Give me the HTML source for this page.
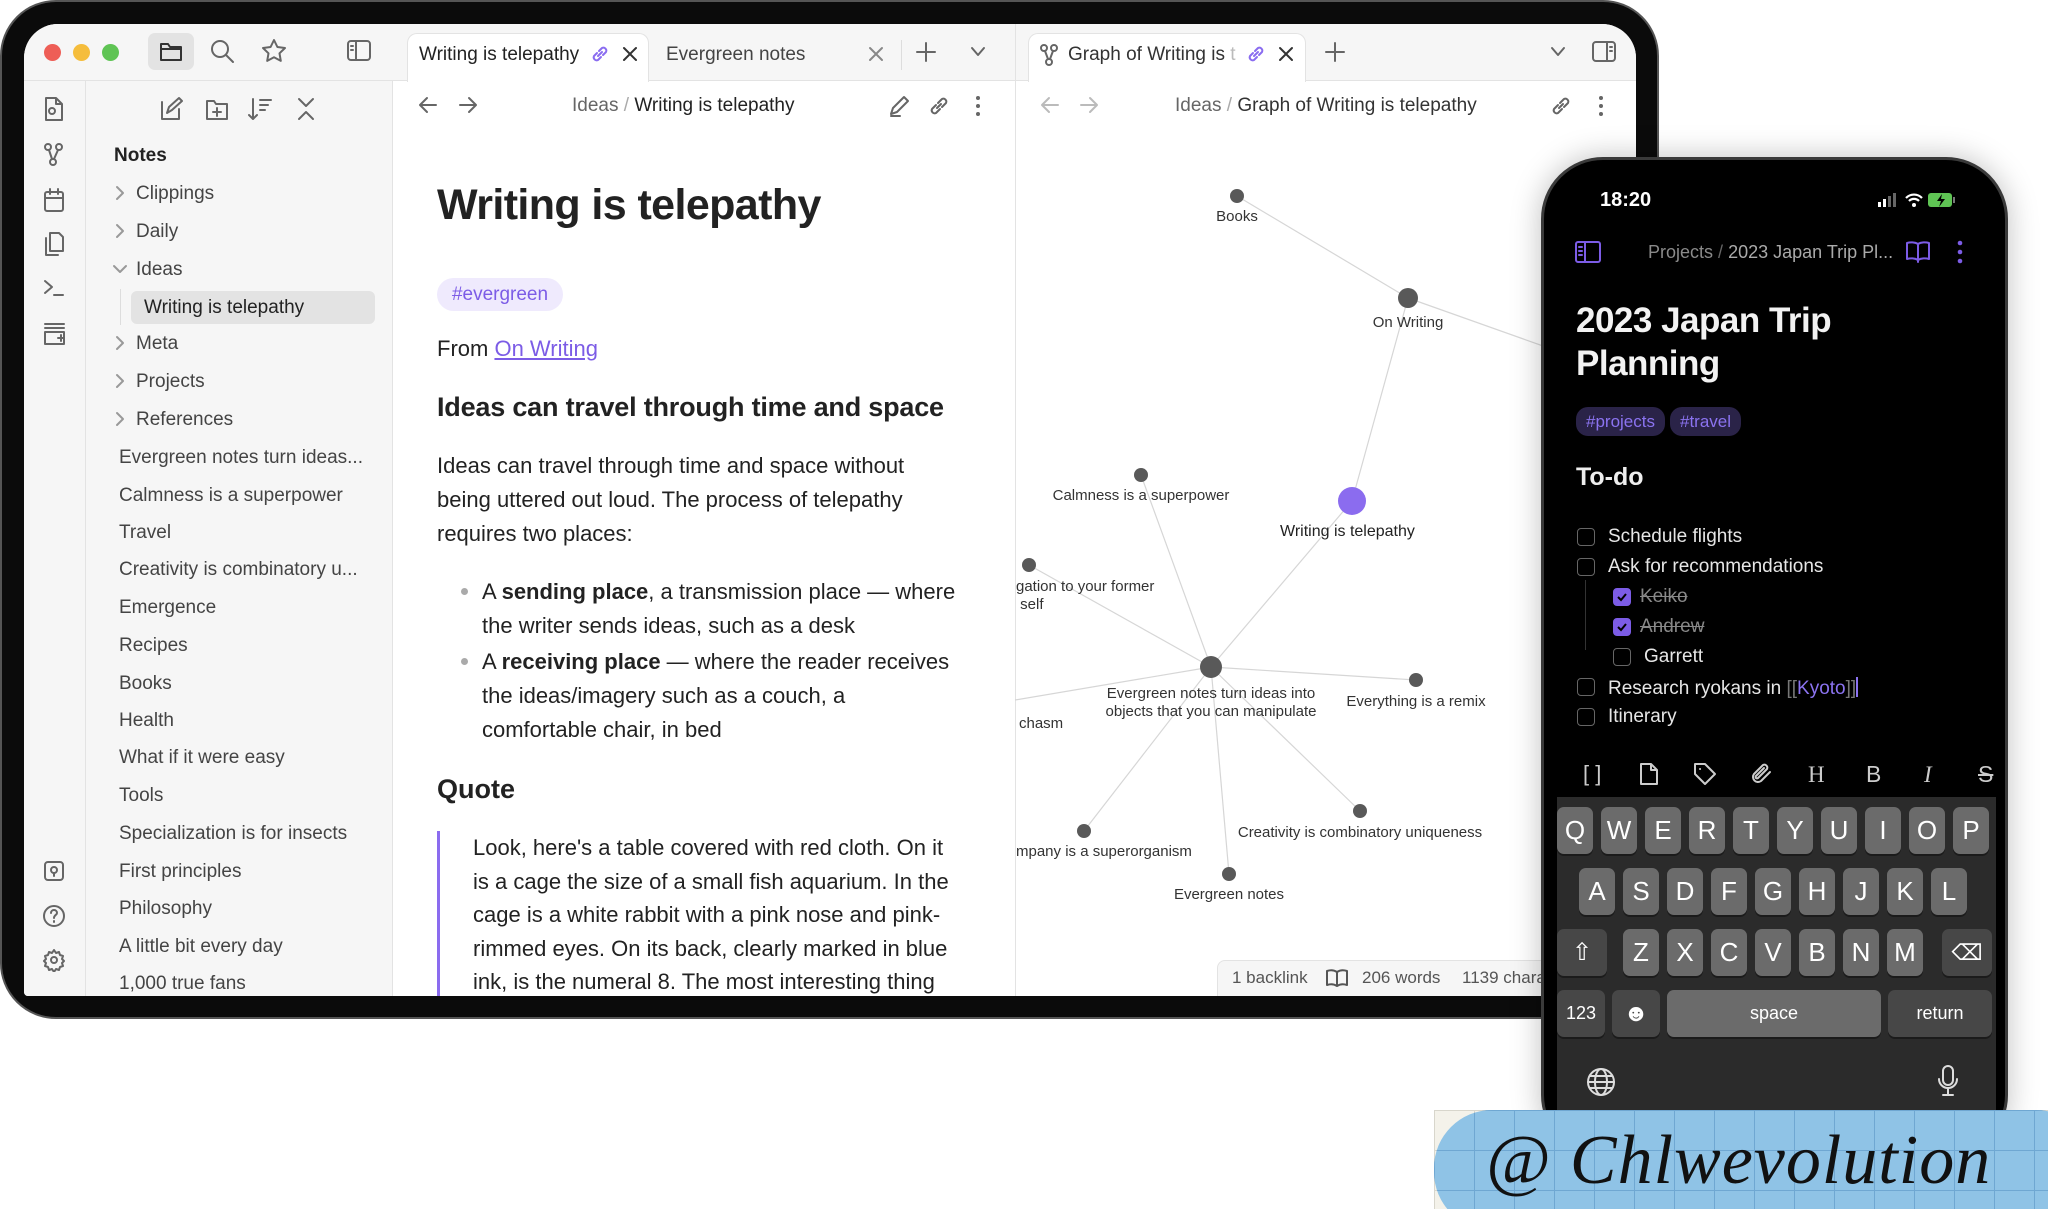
<!DOCTYPE html>
<html><head><meta charset="utf-8">
<style>
*{margin:0;padding:0;box-sizing:border-box}
body{width:2048px;height:1209px;background:#fff;position:relative;overflow:hidden;font-family:"Liberation Sans",sans-serif;color:#222}
.a{position:absolute;white-space:nowrap;line-height:1}
#frame{position:absolute;left:0;top:0;width:1659px;height:1019px;background:#0b0b0b;border-radius:56px;border:2px solid #555}
#scr{position:absolute;left:0;top:0;width:2048px;height:1209px;clip-path:inset(24px 412px 213px 24px round 34px 34px 4px 4px);background:#fff}
.side{font-size:19px;color:#444}
.ic{position:absolute;fill:none;stroke:#666;stroke-width:2;stroke-linecap:round;stroke-linejoin:round}
.g{font-size:15px;color:#333;transform:translateX(-50%)}
#phone{position:absolute;left:1541px;top:157px;width:467px;height:1000px;background:#000;border-radius:62px;border:3px solid #3a3a3a;box-shadow:0 0 30px rgba(0,0,0,.25)}
.pt{color:#e6e6e6;font-size:19px}
.cb{position:absolute;width:18px;height:18px;border:1.6px solid #666;border-radius:4px}
.cbk{background:#7c5ce6;border-color:#7c5ce6}
.key{position:absolute;height:47px;background:#6b6b6b;border-radius:7px;color:#fff;font-size:26px;text-align:center;line-height:47px;box-shadow:0 2px 0 #1b1b1b}
.sp{background:#474747}
</style></head><body>
<div id="frame"></div>
<div id="scr">
 <div style="position:absolute;left:24px;top:24px;width:368px;height:972px;background:#f6f6f6"></div>
 <div style="position:absolute;left:85px;top:81px;width:1px;height:915px;background:#e3e3e3"></div>
 <div style="position:absolute;left:392px;top:24px;width:1px;height:972px;background:#e3e3e3"></div>
 <div style="position:absolute;left:392px;top:24px;width:1244px;height:57px;background:#f6f6f6"></div>
 <div style="position:absolute;left:24px;top:80px;width:1612px;height:1px;background:#e3e3e3"></div>
 <div style="position:absolute;left:1015px;top:24px;width:1px;height:972px;background:#e3e3e3"></div>
 <div style="position:absolute;left:407px;top:33px;width:242px;height:49px;background:#fff;border:1px solid #e3e3e3;border-bottom:none;border-radius:10px 10px 0 0"></div>
 <div style="position:absolute;left:1028px;top:33px;width:278px;height:49px;background:#fff;border:1px solid #e3e3e3;border-bottom:none;border-radius:10px 10px 0 0"></div>
 <div style="position:absolute;left:44px;top:44px;width:17px;height:17px;border-radius:50%;background:#ee5e56"></div>
 <div style="position:absolute;left:73px;top:44px;width:17px;height:17px;border-radius:50%;background:#f5bd3c"></div>
 <div style="position:absolute;left:102px;top:44px;width:17px;height:17px;border-radius:50%;background:#5fc454"></div>
 <div style="position:absolute;left:148px;top:33px;width:46px;height:37px;border-radius:7px;background:#e3e3e3"></div>
 <svg class="ic" style="left:158px;top:39px;stroke:#333" width="26" height="24"><path d="M3 5h7l2 3h11v13H3z M3 10h20"/></svg>
 <svg class="ic" style="left:210px;top:39px" width="26" height="26"><circle cx="10" cy="10" r="8"/><path d="M16 16l7 7"/></svg>
 <svg class="ic" style="left:261px;top:38px" width="26" height="26"><path d="M13 2l3.4 7 7.6 1-5.5 5.3 1.3 7.6L13 19.3 6.2 22.9 7.5 15.3 2 10l7.6-1z"/></svg>
 <svg class="ic" style="left:346px;top:39px" width="26" height="24"><rect x="2" y="2" width="22" height="19" rx="3"/><path d="M10 2v19M5 7h2M5 11h2"/></svg>
 <div class="a" style="left:419px;top:45px;font-size:19px;color:#222">Writing is telepathy</div>
 <svg class="ic" style="left:590px;top:44px;stroke:#8a6cf0" width="20" height="20"><path d="M8 12l4-4M7 9l-3 3a3 3 0 004 4l3-3M13 11l3-3a3 3 0 00-4-4l-3 3"/></svg>
 <svg class="ic" style="left:622px;top:46px;stroke:#333" width="16" height="16"><path d="M2 2l12 12M14 2L2 14"/></svg>
 <div class="a" style="left:666px;top:45px;font-size:19px;color:#444">Evergreen notes</div>
 <svg class="ic" style="left:868px;top:46px;stroke:#888" width="16" height="16"><path d="M2 2l12 12M14 2L2 14"/></svg>
 <div style="position:absolute;left:901px;top:40px;width:1px;height:30px;background:#ddd"></div>
 <svg class="ic" style="left:916px;top:42px" width="20" height="20"><path d="M10 1v18M1 10h18"/></svg>
 <svg class="ic" style="left:970px;top:46px" width="16" height="12"><path d="M2 2l6 7 6-7"/></svg>
 <svg class="ic" style="left:1040px;top:44px" width="18" height="22"><circle cx="4" cy="4" r="3"/><circle cx="14" cy="4" r="3"/><circle cx="9" cy="18" r="3"/><path d="M5 7l3 8M13 7l-3 8"/></svg>
 <div class="a" style="left:1068px;top:45px;font-size:19px;color:#333">Graph of Writing is <span style="color:#bbb">t</span></div>
 <svg class="ic" style="left:1246px;top:44px;stroke:#8a6cf0" width="20" height="20"><path d="M8 12l4-4M7 9l-3 3a3 3 0 004 4l3-3M13 11l3-3a3 3 0 00-4-4l-3 3"/></svg>
 <svg class="ic" style="left:1278px;top:46px;stroke:#333" width="16" height="16"><path d="M2 2l12 12M14 2L2 14"/></svg>
 <svg class="ic" style="left:1325px;top:42px" width="20" height="20"><path d="M10 1v18M1 10h18"/></svg>
 <svg class="ic" style="left:1550px;top:46px" width="16" height="12"><path d="M2 2l6 7 6-7"/></svg>
 <svg class="ic" style="left:1591px;top:40px" width="26" height="24"><rect x="2" y="2" width="22" height="19" rx="3"/><path d="M16 2v19M19 7h2M19 11h2"/></svg>
 <svg class="ic" style="left:42px;top:96px" width="24" height="26"><path d="M4 2h10l6 6v16H4zM14 2v6h6"/><circle cx="10" cy="15" r="3"/></svg>
 <svg class="ic" style="left:42px;top:142px" width="24" height="26"><circle cx="6" cy="5" r="3"/><circle cx="17" cy="5" r="3"/><circle cx="11" cy="20" r="3"/><path d="M7 8l3 9M16 8l-4 9"/></svg>
 <svg class="ic" style="left:42px;top:187px" width="24" height="26"><rect x="3" y="5" width="18" height="19" rx="2"/><path d="M3 11h18M8 2v5M16 2v5"/></svg>
 <svg class="ic" style="left:42px;top:231px" width="24" height="26"><path d="M8 2h9l4 4v14H8zM4 7v17h12"/></svg>
 <svg class="ic" style="left:42px;top:276px" width="24" height="24"><path d="M3 5l7 6-7 6M12 19h9"/></svg>
 <svg class="ic" style="left:42px;top:321px" width="26" height="26"><path d="M3 3h19M3 7h19M3 11h19v12H3zM16 17h6M19 14v6"/></svg>
 <svg class="ic" style="left:42px;top:859px" width="24" height="24"><rect x="3" y="3" width="18" height="18" rx="3"/><circle cx="12" cy="11" r="3"/><path d="M12 14v3"/></svg>
 <svg class="ic" style="left:42px;top:904px" width="24" height="24"><circle cx="12" cy="12" r="10"/><path d="M9 9a3 3 0 116 0c0 2-3 2-3 5M12 17v1"/></svg>
 <svg class="ic" style="left:42px;top:948px" width="24" height="24"><circle cx="12" cy="12" r="3"/><path d="M12 2l2 3 3-1 1 3 3 1-1 3 2 2-2 2 1 3-3 1-1 3-3-1-2 3-2-3-3 1-1-3-3-1 1-3-2-2 2-2-1-3 3-1 1-3 3 1z"/></svg>
 <svg class="ic" style="left:158px;top:96px" width="26" height="26"><path d="M4 6v17h17V13M9 17l2-6 10-9 3 3-10 9z"/></svg>
 <svg class="ic" style="left:204px;top:96px" width="26" height="26"><path d="M3 5h7l2 3h11v15H3zM13 12v8M9 16h8"/></svg>
 <svg class="ic" style="left:248px;top:96px" width="26" height="26"><path d="M5 3v20M1 19l4 4 4-4M12 4h11M12 9h8M12 14h5"/></svg>
 <svg class="ic" style="left:294px;top:96px" width="24" height="26"><path d="M5 3l7 7 7-7M5 23l7-7 7 7"/></svg>
 <div class="a" style="left:114px;top:146px;font-size:19px;font-weight:bold;color:#222">Notes</div>
 <svg class="ic" style="left:114px;top:185px;stroke:#999" width="12" height="16"><path d="M3 2l6 6-6 6"/></svg>
 <div class="a side" style="left:136px;top:184px">Clippings</div>
 <svg class="ic" style="left:114px;top:223px;stroke:#999" width="12" height="16"><path d="M3 2l6 6-6 6"/></svg>
 <div class="a side" style="left:136px;top:222px">Daily</div>
 <svg class="ic" style="left:112px;top:263px;stroke:#999" width="16" height="12"><path d="M2 3l6 6 6-6"/></svg>
 <div class="a side" style="left:136px;top:260px">Ideas</div>
 <div style="position:absolute;left:120px;top:289px;width:1px;height:36px;background:#ddd"></div>
 <div style="position:absolute;left:131px;top:291px;width:244px;height:33px;background:#e3e3e3;border-radius:6px"></div>
 <div class="a side" style="left:144px;top:298px;color:#222">Writing is telepathy</div>
 <svg class="ic" style="left:114px;top:335px;stroke:#999" width="12" height="16"><path d="M3 2l6 6-6 6"/></svg>
 <div class="a side" style="left:136px;top:334px">Meta</div>
 <svg class="ic" style="left:114px;top:373px;stroke:#999" width="12" height="16"><path d="M3 2l6 6-6 6"/></svg>
 <div class="a side" style="left:136px;top:372px">Projects</div>
 <svg class="ic" style="left:114px;top:411px;stroke:#999" width="12" height="16"><path d="M3 2l6 6-6 6"/></svg>
 <div class="a side" style="left:136px;top:410px">References</div>
 <div class="a side" style="left:119px;top:448px">Evergreen notes turn ideas...</div>
 <div class="a side" style="left:119px;top:486px">Calmness is a superpower</div>
 <div class="a side" style="left:119px;top:523px">Travel</div>
 <div class="a side" style="left:119px;top:560px">Creativity is combinatory u...</div>
 <div class="a side" style="left:119px;top:598px">Emergence</div>
 <div class="a side" style="left:119px;top:636px">Recipes</div>
 <div class="a side" style="left:119px;top:674px">Books</div>
 <div class="a side" style="left:119px;top:711px">Health</div>
 <div class="a side" style="left:119px;top:748px">What if it were easy</div>
 <div class="a side" style="left:119px;top:786px">Tools</div>
 <div class="a side" style="left:119px;top:824px">Specialization is for insects</div>
 <div class="a side" style="left:119px;top:862px">First principles</div>
 <div class="a side" style="left:119px;top:899px">Philosophy</div>
 <div class="a side" style="left:119px;top:937px">A little bit every day</div>
 <div class="a side" style="left:119px;top:974px">1,000 true fans</div>
 <svg class="ic" style="left:418px;top:95px" width="20" height="20"><path d="M18 10H2M9 3L2 10l7 7"/></svg>
 <svg class="ic" style="left:458px;top:95px" width="20" height="20"><path d="M2 10h16M11 3l7 7-7 7"/></svg>
 <div class="a" style="left:572px;top:96px;font-size:19px;color:#666">Ideas <span style="color:#aaa">/</span> <span style="color:#222">Writing is telepathy</span></div>
 <svg class="ic" style="left:888px;top:95px" width="22" height="22"><path d="M3 19l2-6L16 2l4 4L9 17zM3 21h9"/></svg>
 <svg class="ic" style="left:928px;top:95px" width="22" height="22"><path d="M9 13l4-4M8 10l-4 4a3 3 0 004 4l4-4M14 12l4-4a3 3 0 00-4-4l-4 4"/></svg>
 <svg class="ic" style="left:970px;top:95px;fill:#666;stroke:none" width="16" height="22"><circle cx="8" cy="3" r="2"/><circle cx="8" cy="11" r="2"/><circle cx="8" cy="19" r="2"/></svg>
 <div class="a" style="left:437px;top:184px;font-size:43px;font-weight:bold;color:#222;letter-spacing:-0.6px">Writing is telepathy</div>
 <div class="a" style="left:437px;top:278px;width:126px;height:33px;background:#efeafd;border-radius:17px;color:#7c5ce6;font-size:19px;line-height:33px;text-align:center">#evergreen</div>
 <div class="a" style="left:437px;top:338px;font-size:22px">From <span style="color:#7c5ce6;text-decoration:underline">On Writing</span></div>
 <div class="a" style="left:437px;top:394px;font-size:27px;font-weight:bold;color:#222;letter-spacing:-0.2px">Ideas can travel through time and space</div>
 <div class="a" style="left:437px;top:449px;font-size:22px;line-height:34px;color:#222">Ideas can travel through time and space without<br>being uttered out loud. The process of telepathy<br>requires two places:</div>
 <div style="position:absolute;left:461px;top:588px;width:7px;height:7px;border-radius:50%;background:#aaa"></div>
 <div class="a" style="left:482px;top:575px;font-size:22px;line-height:34px">A <b>sending place</b>, a transmission place — where<br>the writer sends ideas, such as a desk</div>
 <div style="position:absolute;left:461px;top:658px;width:7px;height:7px;border-radius:50%;background:#aaa"></div>
 <div class="a" style="left:482px;top:645px;font-size:22px;line-height:34px">A <b>receiving place</b> — where the reader receives<br>the ideas/imagery such as a couch, a<br>comfortable chair, in bed</div>
 <div class="a" style="left:437px;top:776px;font-size:27px;font-weight:bold">Quote</div>
 <div style="position:absolute;left:437px;top:831px;width:3px;height:170px;background:#8b6cef"></div>
 <div class="a" style="left:473px;top:831px;font-size:22px;line-height:33.5px">Look, here's a table covered with red cloth. On it<br>is a cage the size of a small fish aquarium. In the<br>cage is a white rabbit with a pink nose and pink-<br>rimmed eyes. On its back, clearly marked in blue<br>ink, is the numeral 8. The most interesting thing</div>
 <svg class="ic" style="left:1040px;top:95px;stroke:#bbb" width="20" height="20"><path d="M18 10H2M9 3L2 10l7 7"/></svg>
 <svg class="ic" style="left:1079px;top:95px;stroke:#bbb" width="20" height="20"><path d="M2 10h16M11 3l7 7-7 7"/></svg>
 <div class="a" style="left:1175px;top:96px;font-size:19px;color:#666">Ideas <span style="color:#aaa">/</span> <span style="color:#333">Graph of Writing is telepathy</span></div>
 <svg class="ic" style="left:1550px;top:95px" width="22" height="22"><path d="M9 13l4-4M8 10l-4 4a3 3 0 004 4l4-4M14 12l4-4a3 3 0 00-4-4l-4 4"/></svg>
 <svg class="ic" style="left:1593px;top:95px;fill:#666;stroke:none" width="16" height="22"><circle cx="8" cy="3" r="2"/><circle cx="8" cy="11" r="2"/><circle cx="8" cy="19" r="2"/></svg>
 <svg style="position:absolute;left:0;top:0" width="2048" height="1209">
  <g stroke="#d6d6d6" stroke-width="1.2">
   <line x1="1237" y1="196" x2="1408" y2="298"/>
   <line x1="1408" y1="298" x2="1560" y2="352"/>
   <line x1="1408" y1="298" x2="1352" y2="501"/>
   <line x1="1352" y1="501" x2="1211" y2="667"/>
   <line x1="1141" y1="475" x2="1211" y2="667"/>
   <line x1="1029" y1="565" x2="1211" y2="667"/>
   <line x1="1211" y1="667" x2="1416" y2="680"/>
   <line x1="1211" y1="667" x2="1360" y2="811"/>
   <line x1="1211" y1="667" x2="1229" y2="874"/>
   <line x1="1211" y1="667" x2="1084" y2="831"/>
   <line x1="1211" y1="667" x2="1015" y2="700"/>
  </g>
  <g fill="#595959">
   <circle cx="1237" cy="196" r="7"/><circle cx="1408" cy="298" r="10"/><circle cx="1141" cy="475" r="7"/>
   <circle cx="1029" cy="565" r="7"/><circle cx="1211" cy="667" r="11"/><circle cx="1416" cy="680" r="7"/>
   <circle cx="1084" cy="831" r="7"/><circle cx="1360" cy="811" r="7"/><circle cx="1229" cy="874" r="7"/>
  </g>
  <circle cx="1352" cy="501" r="14" fill="#8b6cef"/>
 </svg>
 <div class="a g" style="left:1237px;top:209px">Books</div>
 <div class="a g" style="left:1408px;top:315px">On Writing</div>
 <div class="a g" style="left:1141px;top:488px">Calmness is a superpower</div>
 <div class="a" style="left:1280px;top:524px;font-size:16px;color:#222">Writing is telepathy</div>
 <div class="a" style="left:1016px;top:578px;font-size:15px;color:#333;line-height:18px">gation to your former<br>&nbsp;self</div>
 <div class="a g" style="left:1211px;top:685px;text-align:center;line-height:18px">Evergreen notes turn ideas into<br>objects that you can manipulate</div>
 <div class="a g" style="left:1416px;top:694px">Everything is a remix</div>
 <div class="a" style="left:1019px;top:716px;font-size:15px;color:#333">chasm</div>
 <div class="a" style="left:1016px;top:844px;font-size:15px;color:#333">mpany is a superorganism</div>
 <div class="a g" style="left:1360px;top:825px">Creativity is combinatory uniqueness</div>
 <div class="a g" style="left:1229px;top:887px">Evergreen notes</div>
 <div style="position:absolute;left:1217px;top:960px;width:420px;height:40px;background:#f6f6f6;border:1px solid #e3e3e3;border-radius:8px 0 0 0"></div>
 <div class="a" style="left:1232px;top:969px;font-size:17px;color:#555">1 backlink</div>
 <svg class="ic" style="left:1326px;top:968px;stroke:#555" width="22" height="20"><path d="M11 4C8 2 4 2 1 3v14c3-1 7-1 10 1 3-2 7-2 10-1V3c-3-1-7-1-10 1zM11 4v14"/></svg>
 <div class="a" style="left:1362px;top:969px;font-size:17px;color:#555">206 words</div>
 <div class="a" style="left:1462px;top:969px;font-size:17px;color:#555">1139 characters</div>
</div>

<div id="phone"></div>
<div style="position:absolute;left:1557px;top:797px;width:439px;height:320px;background:#2b2b2b"></div>
<div class="a" style="left:1600px;top:190px;font-size:20px;color:#fff;font-weight:bold">18:20</div>
<svg style="position:absolute;left:1876px;top:190px" width="90" height="20">
 <rect x="2" y="12" width="3" height="5" fill="#fff"/><rect x="7" y="9" width="3" height="8" fill="#fff"/><rect x="12" y="6" width="3" height="11" fill="#666"/><rect x="17" y="3" width="3" height="14" fill="#666"/>
 <path d="M30 8a11 11 0 0116 0M33 11a7 7 0 0110 0" stroke="#fff" stroke-width="2.2" fill="none"/><circle cx="38" cy="15" r="2" fill="#fff"/>
 <rect x="52" y="3" width="24" height="14" rx="3" fill="#5fc454"/><rect x="77" y="7" width="2" height="6" fill="#777"/><path d="M66 4l-5 7h4l-2 6 6-8h-4z" fill="#000"/>
</svg>
<svg class="ic" style="left:1574px;top:240px;stroke:#7c5ce6" width="28" height="24"><rect x="2" y="2" width="24" height="20" rx="2"/><path d="M11 2v20M5 7h3M5 11h3M5 15h3"/></svg>
<div class="a" style="left:1648px;top:243px;font-size:18px;color:#8a8a8a">Projects <span style="color:#666">/</span> <span style="color:#aaa">2023 Japan Trip Pl...</span></div>
<svg class="ic" style="left:1905px;top:240px;stroke:#7c5ce6" width="26" height="26"><path d="M13 4C10 2 5 2 2 3v16c3-1 8-1 11 1 3-2 8-2 11-1V3c-3-1-8-1-11 1zM13 4v18"/></svg>
<svg style="position:absolute;left:1955px;top:240px" width="10" height="26"><circle cx="5" cy="3" r="2.3" fill="#7c5ce6"/><circle cx="5" cy="12" r="2.3" fill="#7c5ce6"/><circle cx="5" cy="21" r="2.3" fill="#7c5ce6"/></svg>
<div class="a" style="left:1576px;top:299px;font-size:35px;font-weight:bold;color:#f2f2f2;line-height:43px;letter-spacing:-0.5px">2023 Japan Trip<br>Planning</div>
<div class="a" style="left:1576px;top:407px;width:89px;height:29px;background:#2a2348;border-radius:12px;color:#8b73f0;font-size:17px;line-height:29px;text-align:center">#projects</div>
<div class="a" style="left:1670px;top:407px;width:71px;height:29px;background:#2a2348;border-radius:12px;color:#8b73f0;font-size:17px;line-height:29px;text-align:center">#travel</div>
<div class="a" style="left:1576px;top:465px;font-size:25px;font-weight:bold;color:#eee">To-do</div>
<div class="cb" style="left:1577px;top:528px"></div><div class="a pt" style="left:1608px;top:527px">Schedule flights</div>
<div class="cb" style="left:1577px;top:558px"></div><div class="a pt" style="left:1608px;top:557px">Ask for recommendations</div>
<div style="position:absolute;left:1585px;top:580px;width:1px;height:70px;background:#333"></div>
<div class="cb cbk" style="left:1613px;top:588px"></div><svg style="position:absolute;left:1616px;top:591px" width="12" height="12"><path d="M2 6l3 3 5-6" stroke="#000" stroke-width="2" fill="none"/></svg><div class="a pt" style="left:1640px;top:587px;color:#888;text-decoration:line-through">Keiko</div>
<div class="cb cbk" style="left:1613px;top:618px"></div><svg style="position:absolute;left:1616px;top:621px" width="12" height="12"><path d="M2 6l3 3 5-6" stroke="#000" stroke-width="2" fill="none"/></svg><div class="a pt" style="left:1640px;top:617px;color:#888;text-decoration:line-through">Andrew</div>
<div class="cb" style="left:1613px;top:648px"></div><div class="a pt" style="left:1644px;top:647px">Garrett</div>
<div class="cb" style="left:1577px;top:678px"></div><div class="a pt" style="left:1608px;top:677px">Research ryokans in <span style="color:#777">[[</span><span style="color:#8b73f0">Kyoto</span><span style="color:#777">]]</span><span style="display:inline-block;width:2px;height:20px;background:#8b73f0;vertical-align:-3px"></span></div>
<div class="cb" style="left:1577px;top:708px"></div><div class="a pt" style="left:1608px;top:707px">Itinerary</div>
<div class="a" style="left:1583px;top:763px;font-size:22px;color:#ccc">[ ]</div>
<svg class="ic" style="left:1638px;top:762px;stroke:#ccc" width="22" height="24"><path d="M3 2h10l6 6v14H3zM13 2v6h6"/></svg>
<svg class="ic" style="left:1693px;top:762px;stroke:#ccc" width="24" height="24"><path d="M2 2h10l10 10-10 10L2 12zM7 7h.1"/></svg>
<svg class="ic" style="left:1750px;top:762px;stroke:#ccc" width="24" height="24"><path d="M20 10l-9 9a5 5 0 01-7-7l9-9a3 3 0 014 4l-9 9a1 1 0 01-2-2l8-8"/></svg>
<div class="a" style="left:1808px;top:763px;font-size:23px;color:#ccc;font-family:'Liberation Serif',serif">H</div>
<div class="a" style="left:1866px;top:763px;font-size:23px;color:#ccc">B</div>
<div class="a" style="left:1924px;top:763px;font-size:23px;color:#ccc;font-style:italic;font-family:'Liberation Serif',serif">I</div>
<div class="a" style="left:1978px;top:763px;font-size:23px;color:#ccc;text-decoration:line-through">S</div>
<div class="key" style="left:1557px;top:807px;width:36px">Q</div><div class="key" style="left:1601px;top:807px;width:36px">W</div><div class="key" style="left:1645px;top:807px;width:36px">E</div><div class="key" style="left:1689px;top:807px;width:36px">R</div><div class="key" style="left:1733px;top:807px;width:36px">T</div><div class="key" style="left:1777px;top:807px;width:36px">Y</div><div class="key" style="left:1821px;top:807px;width:36px">U</div><div class="key" style="left:1865px;top:807px;width:36px">I</div><div class="key" style="left:1909px;top:807px;width:36px">O</div><div class="key" style="left:1953px;top:807px;width:36px">P</div>
<div class="key" style="left:1579px;top:868px;width:36px">A</div><div class="key" style="left:1623px;top:868px;width:36px">S</div><div class="key" style="left:1667px;top:868px;width:36px">D</div><div class="key" style="left:1711px;top:868px;width:36px">F</div><div class="key" style="left:1755px;top:868px;width:36px">G</div><div class="key" style="left:1799px;top:868px;width:36px">H</div><div class="key" style="left:1843px;top:868px;width:36px">J</div><div class="key" style="left:1887px;top:868px;width:36px">K</div><div class="key" style="left:1931px;top:868px;width:36px">L</div>
<div class="key sp" style="left:1557px;top:929px;width:50px;font-size:24px">⇧</div>
<div class="key" style="left:1623px;top:929px;width:36px">Z</div><div class="key" style="left:1667px;top:929px;width:36px">X</div><div class="key" style="left:1711px;top:929px;width:36px">C</div><div class="key" style="left:1755px;top:929px;width:36px">V</div><div class="key" style="left:1799px;top:929px;width:36px">B</div><div class="key" style="left:1843px;top:929px;width:36px">N</div><div class="key" style="left:1887px;top:929px;width:36px">M</div>
<div class="key sp" style="left:1942px;top:929px;width:50px;font-size:22px">⌫</div>
<div class="key sp" style="left:1557px;top:990px;width:48px;font-size:18px">123</div>
<div class="key sp" style="left:1612px;top:990px;width:48px;font-size:24px">☻</div>
<div class="key" style="left:1667px;top:990px;width:214px;font-size:18px">space</div>
<div class="key sp" style="left:1888px;top:990px;width:104px;font-size:18px">return</div>
<svg class="ic" style="left:1586px;top:1067px;stroke:#ddd" width="30" height="30"><circle cx="15" cy="15" r="13"/><ellipse cx="15" cy="15" rx="6" ry="13"/><path d="M2 15h26M4 9h22M4 21h22"/></svg>
<svg class="ic" style="left:1936px;top:1064px;stroke:#ddd" width="24" height="34"><rect x="7" y="2" width="10" height="19" rx="5"/><path d="M3 15a9 9 0 0018 0M12 24v7M7 31h10"/></svg>
<svg style="position:absolute;left:1434px;top:1110px" width="614" height="99">
 <defs><pattern id="gr" width="40" height="40" patternUnits="userSpaceOnUse"><path d="M0 0V40M0 0H40" stroke="#6fa7d2" stroke-width="2"/></pattern>
 <pattern id="gc" width="40" height="40" patternUnits="userSpaceOnUse"><path d="M0 0V40M0 0H40" stroke="#d8d6cc" stroke-width="2"/></pattern></defs>
 <rect width="614" height="99" fill="#f4f2ea"/><rect width="614" height="99" fill="url(#gc)"/>
 <rect x="0" y="0" width="660" height="120" rx="58" fill="#8fc3e6"/><rect x="0" y="0" width="660" height="120" rx="58" fill="url(#gr)"/>
</svg>
<div class="a" style="left:1486px;top:1126px;font-size:70px;font-style:italic;font-family:'Liberation Serif',serif;color:#111;letter-spacing:1px">@ Chlwevolution</div>
</body></html>
